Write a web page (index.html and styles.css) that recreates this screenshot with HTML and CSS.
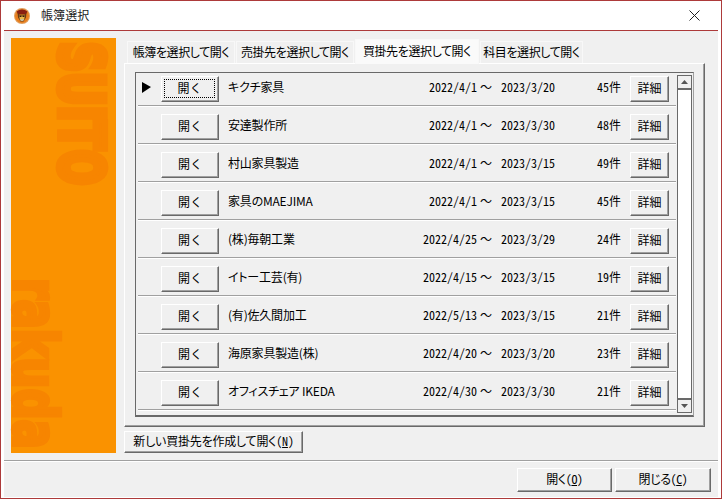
FILE: index.html
```html
<!DOCTYPE html>
<html lang="ja">
<head>
<meta charset="utf-8">
<title>帳簿選択</title>
<link rel="stylesheet" href="styles.css">
</head>
<body>
<div class="window">
  <header class="titlebar">
    <svg class="app-icon" viewBox="0 0 16 16" width="16" height="16"><circle cx="8" cy="8" r="8" fill="#e0a060"/><circle cx="8" cy="8" r="7" fill="#e87f1e"/><path d="M2.500 3.500Q8 -.5 13.500 3.500L12 6H4z" fill="#8a1f12"/><path d="M3.500 4.500l2 2h5l2-2-.5 5-2.500 4H6.500L4 9.500z" fill="#6b3a14"/><path d="M5 7.500h6l-1 4.500H6z" fill="#e8b84a"/><path d="M5.500 7.500h2v1.500h-2zM8.500 7.500h2v1.500h-2z" fill="#3a1a08"/><path d="M6.500 11h3v2h-3z" fill="#c9c0a0"/></svg>
    <span class="title">帳簿選択</span>
    <svg class="close" viewBox="0 0 11 11" width="11" height="11"><path d="M.5.5l10 10M10.500.5l-10 10" stroke="#222" stroke-width="1" fill="none"/></svg>
  </header>
  <div class="client">
    <main class="main">
      <aside class="sidebar">
        <span class="mark mark-top">SUITO</span>
        <span class="mark mark-bottom">rakuda</span>
      </aside>
      <section class="content">
        <nav class="tabs">
          <span class="tab t1">帳簿を選択して開く</span>
          <span class="tab t2">売掛先を選択して開く</span>
          <span class="tab t3 active">買掛先を選択して開く</span>
          <span class="tab t4">科目を選択して開く</span>
        </nav>
        <div class="panel">
          <div class="listbox">
            <div class="rows">
              <div class="row"><span class="arrow"></span><button class="btn open focus"><span class="focus-ring">開く</span></button><span class="name">キクチ家具</span><span class="from">2022/4/1</span><span class="tilde">～</span><span class="to">2023/3/20</span><span class="count">45件</span><button class="btn detail">詳細</button></div>
              <div class="row"><span class="arrow off"></span><button class="btn open">開く</button><span class="name">安達製作所</span><span class="from">2022/4/1</span><span class="tilde">～</span><span class="to">2023/3/30</span><span class="count">48件</span><button class="btn detail">詳細</button></div>
              <div class="row"><span class="arrow off"></span><button class="btn open">開く</button><span class="name">村山家具製造</span><span class="from">2022/4/1</span><span class="tilde">～</span><span class="to">2023/3/15</span><span class="count">49件</span><button class="btn detail">詳細</button></div>
              <div class="row"><span class="arrow off"></span><button class="btn open">開く</button><span class="name">家具のMAEJIMA</span><span class="from">2022/4/1</span><span class="tilde">～</span><span class="to">2023/3/15</span><span class="count">45件</span><button class="btn detail">詳細</button></div>
              <div class="row"><span class="arrow off"></span><button class="btn open">開く</button><span class="name">(株)毎朝工業</span><span class="from">2022/4/25</span><span class="tilde">～</span><span class="to">2023/3/29</span><span class="count">24件</span><button class="btn detail">詳細</button></div>
              <div class="row"><span class="arrow off"></span><button class="btn open">開く</button><span class="name">イトー工芸(有)</span><span class="from">2022/4/15</span><span class="tilde">～</span><span class="to">2023/3/15</span><span class="count">19件</span><button class="btn detail">詳細</button></div>
              <div class="row"><span class="arrow off"></span><button class="btn open">開く</button><span class="name">(有)佐久間加工</span><span class="from">2022/5/13</span><span class="tilde">～</span><span class="to">2023/3/15</span><span class="count">21件</span><button class="btn detail">詳細</button></div>
              <div class="row"><span class="arrow off"></span><button class="btn open">開く</button><span class="name">海原家具製造(株)</span><span class="from">2022/4/20</span><span class="tilde">～</span><span class="to">2023/3/20</span><span class="count">23件</span><button class="btn detail">詳細</button></div>
              <div class="row"><span class="arrow off"></span><button class="btn open">開く</button><span class="name">オフィスチェア IKEDA</span><span class="from">2022/4/30</span><span class="tilde">～</span><span class="to">2023/3/30</span><span class="count">21件</span><button class="btn detail">詳細</button></div>
            </div>
            <div class="scrollbar">
              <span class="sb-btn"><svg viewBox="0 0 7 4" width="7" height="4"><path d="M3.500 0L7 4H0z" fill="#555"/></svg></span>
              <span class="sb-track"></span>
              <span class="sb-btn"><svg viewBox="0 0 7 4" width="7" height="4"><path d="M0 0h7L3.500 4z" fill="#555"/></svg></span>
            </div>
          </div>
        </div>
        <button class="btn new">新しい買掛先を作成して開く(<u>N</u>)</button>
      </section>
    </main>
    <footer class="footer">
      <button class="btn foot">開く(<u>O</u>)</button>
      <button class="btn foot wide">閉じる(<u>C</u>)</button>
    </footer>
  </div>
</div>
</body>
</html>
```
FILE: styles.css
```css
* { box-sizing: border-box; }
html, body { margin: 0; padding: 0; }
body {
  width: 722px; height: 499px; overflow: hidden; background: #fff;
  font: 12px/14px "Noto Sans CJK JP", "Noto Sans", sans-serif; color: #000;
  font-feature-settings: "palt", "hwid";
}
.window { width: 722px; height: 499px; border: 1px solid #ad3a3a; display: flex; flex-direction: column; background: #fff; }
.titlebar { height: 29px; flex: none; display: flex; align-items: center; padding: 0 21px 0 13px; }
.app-icon { flex: none; }
.title { margin: -2px 0 0 11px; font-size: 12px; color: #222; letter-spacing: 0.1px; flex: 1; }
.close { flex: none; }
.client { flex: 1; margin: 0 3px 3px; border-top: 1px solid #ad3a3a; background: #f0f0f0; display: flex; flex-direction: column; }
.main { height: 429px; flex: none; display: flex; padding: 7px 0 0 7px; gap: 8px; }
.sidebar { width: 105px; height: 415px; background: #fa9200; position: relative; flex: none; }
.mark { position: absolute; color: #f78500; font-family: "DejaVu Sans", sans-serif; font-weight: 700; font-size: 70px; white-space: nowrap; transform-origin: 0 0; line-height: 1; font-feature-settings: normal; }
.mark-top { left: 100px; top: 4px; -webkit-text-stroke: 8px #f78500; transform: rotate(90deg) scale(.595, .86); }
.mark-bottom { left: 54px; top: 240px; -webkit-text-stroke: 5px #f78500; transform: rotate(90deg) scale(.62, .86); }
.content { width: 581px; flex: none; display: flex; flex-direction: column; }
.tabs { height: 25px; display: flex; align-items: flex-end; padding-left: 3px; position: relative; z-index: 1; }
.tab { height: 22px; display: flex; align-items: center; justify-content: center; padding-bottom: 2px; background: #f0f0f0; border: 1px solid #f8f8f8; border-bottom: 0; letter-spacing: -.4px; white-space: nowrap; }
.t1 { width: 108px; }
.t2 { width: 118px; margin-left: 1px; }
.t3 { width: 124px; margin-left: 1px; }
.t4 { width: 103px; margin-left: 1px; }
.tab.active { height: 25px; background: #fafafa; margin-bottom: -1px; padding-bottom: 3px; }
.panel { height: 364px; width: 581px; border: 1px solid; border-color: #fff #696969 #696969 #fff; box-shadow: inset -1px -1px 0 #a0a0a0; padding: 8px 0 0 10px; flex: none; }
.listbox { width: 559px; height: 345px; border: 1px solid; border-color: #696969 #a0a0a0 #696969 #696969; border-bottom-width: 2px; display: flex; }
.rows { width: 538px; margin-left: 2px; padding-top: 3px; display: flex; flex-direction: column; gap: 8px; }
.row { height: 30px; flex: none; display: grid; grid-template-columns: 23px 58px 178px 80px 24px 59px 61px 48px; align-items: start; border-bottom: 1px solid #a0a0a0; box-shadow: 0 1px 0 #fff; padding-right: 7px; }
.arrow { width: 0; height: 0; margin: 6px 0 0 4px; border-left: 9px solid #000; border-top: 5px solid transparent; border-bottom: 6px solid transparent; }
.arrow.off { visibility: hidden; }
.btn { font: inherit; font-feature-settings: inherit; color: #000; background: #f0f0f0; border: 1px solid; border-color: #fff #696969 #696969 #fff; box-shadow: inset -1px -1px 0 #a0a0a0; padding: 0 0 2px; margin: 0; display: block; }
.open, .detail { height: 26px; }
.open { letter-spacing: 2px; }
.focus { padding: 2px 3px 3px 2px; }
.focus-ring { display: flex; align-items: center; justify-content: center; height: 100%; border: 1px dotted #000; padding-bottom: 1px; }
.name { padding: 4px 0 0 9px; white-space: nowrap; letter-spacing: -.2px; font-feature-settings: "palt"; }
.from, .to, .tilde, .count { padding-top: 4px; white-space: nowrap; }
.from { text-align: right; }
.tilde { text-align: left; padding-left: 3px; font-feature-settings: normal; }
.count { text-align: right; }
.detail { width: 39px; margin-left: 9px; }
.scrollbar { width: 15px; margin: 2px 0 2px 1px; border: 1px solid #696969; display: flex; flex-direction: column; background: #fff; }
.sb-btn { height: 14px; flex: none; display: flex; align-items: center; justify-content: center; background: #f0f0f0; border-bottom: 2px solid #696969; }
.sb-btn:last-child { border-bottom: 0; border-top: 2px solid #696969; }
.sb-track { flex: 1; }
.new { width: 179px; height: 22px; margin-top: 4px; letter-spacing: -.2px; }
.footer { height: 37px; border-top: 1px solid #a0a0a0; box-shadow: inset 0 1px 0 #fff; display: flex; justify-content: flex-end; padding: 7px 7px 0 0; gap: 3px; }
.foot { width: 95px; height: 24px; letter-spacing: -.4px; }
.foot.wide { width: 96px; }
```
